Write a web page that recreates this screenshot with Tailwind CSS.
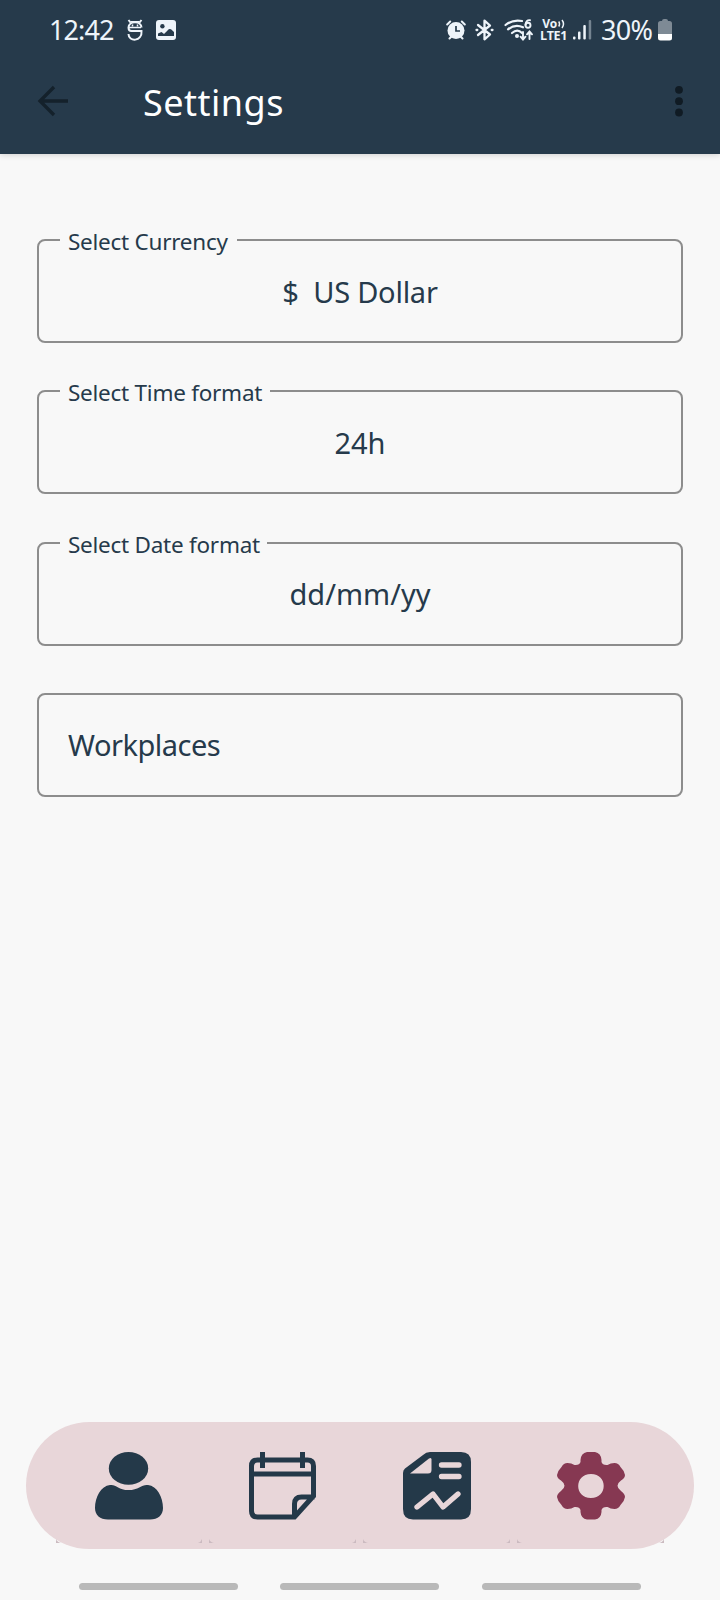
<!DOCTYPE html>
<html lang="en">
<head>
<meta charset="utf-8">
<title>Settings</title>
<script src="https://cdn.jsdelivr.net/npm/@tailwindcss/browser@4"></script>
</head>
<body class="w-[720px] h-[1600px] overflow-hidden flex flex-col bg-[#f8f8f8] text-[#263a4b] font-['Noto_Sans',sans-serif] whitespace-nowrap">
<header class="h-[154px] shrink-0 bg-[#263a4b] text-white shadow-[0_1px_6px_rgba(0,0,0,0.16)] flex flex-col">
  <div class="h-[59px] flex items-center pl-[49px] pr-[48px] text-[#eef4fa]">
    <span class="w-[78px] pt-px text-[27px] tracking-[-0.900px]">12:42</span>
    <svg class="w-4 h-[22px]" viewBox="0 0 16 22" fill="none" stroke="currentColor" stroke-width="2">
      <path d="M1.500 1l2 2.500M14.500 1l-2 2.500M14.500 8.500C14 1.500 2 1.500 1.500 8.500c0 2 1 3.500 3 3.500h10c1 11-13 11-13 3"/>
      <path d="M2 8.500h12M3.500 2.800h9" stroke-width="1.400"/><path d="M5.500 5.500v2M10.500 5.500v2" stroke-width="1.500"/>
    </svg>
    <svg class="w-[20px] h-[20px] ml-[13px]" viewBox="0 0 20 20"><rect width="20" height="20" rx="3" fill="currentColor"/><circle cx="6.400" cy="6.300" r="2.200" fill="#263a4b"/><path d="M2 16V13.500l3.500-1.500 2.500 2 5-5 2 .3 3 2.700v4z" fill="#263a4b"/></svg>
    <svg class="w-[20px] h-[20px] ml-auto" viewBox="0 0 20 20" fill="none" stroke="currentColor" stroke-width="2" stroke-linecap="round"><circle cx="10" cy="10.500" r="8.500" fill="currentColor" stroke="none"/><path d="M1.200 4.500L4.200 1.500M18.800 4.500l-3-3M3.500 18.500l2-2M16.500 18.500l-2-2"/><path d="M10 6v5h4" stroke="#263a4b" stroke-width="1.700" stroke-linecap="butt"/></svg>
    <svg class="w-[19px] h-[22px] ml-[9px]" viewBox="0 0 19 22" fill="none" stroke="currentColor" stroke-width="2.300" stroke-linejoin="round" stroke-linecap="round"><path d="M3 6l12 9.500-5.500 4.800V1.700L15 6.500 3 16M1.500 11h.8M16.700 11h.8"/></svg>
    <svg class="w-[30px] h-[22px] ml-[10px]" viewBox="0 0 30 22" fill="none" stroke="currentColor" stroke-width="2.200" stroke-linecap="round"><path d="M1.500 6C7 1.500 12 .8 18 2M4 10.300c5-4 10-4.500 15-2M8 14c3.500-3 7-3 10 0"/><circle cx="13" cy="17" r="2" fill="currentColor" stroke="none"/><path d="M26 1.200q-4-.5-4.500 4.800" stroke-width="1.900"/><circle cx="24" cy="6.300" r="2.500" stroke-width="1.900"/><path d="M19 13v7m-2.500-2.300L19 20.500l2.500-2.800M25.500 20v-7M23 15.300l2.500-2.800 2.500 2.800" stroke-width="1.900"/></svg>
    <div class="w-[27px] h-[24px] ml-[6px] flex flex-col items-center font-['Open_Sans',sans-serif] font-bold">
      <div class="h-[12px] flex items-center gap-px"><span class="text-[12px] leading-[12px] tracking-[-0.300px]">Vo</span><svg class="w-[7px] h-[10px]" viewBox="0 0 7 10" fill="none" stroke="currentColor" stroke-width="1.500"><path d="M.7 2.500q1.600 2.500 0 5M4 1q3 4 0 8"/></svg></div>
      <span class="h-[12px] text-[12.500px] leading-[12px] tracking-[-0.300px]">LTE1</span>
    </div>
    <svg class="w-[19px] h-[20px] ml-[6px]" viewBox="0 0 19 20" fill="currentColor"><rect y="16.500" width="2.500" height="3" rx="1"/><rect x="5" y="11.500" width="2.500" height="8" rx="1"/><rect x="10.300" y="5" width="2.500" height="14.500" rx="1"/><rect x="15.700" y="0" width="2.500" height="19.500" rx="1" opacity=".4"/></svg>
    <span class="w-[57px] ml-[9px] pt-px text-[27px] tracking-[-0.700px]">30%</span>
    <svg class="w-[14px] h-[22px]" viewBox="0 0 14 22"><path d="M4 2q0-2 2-2h2q2 0 2 2h1.500Q14 2 14 4.500V16H0V4.500Q0 2 2.500 2z" fill="#7e8a95"/><path d="M0 15h14v4q0 2.500-2.500 2.500h-9Q0 21.500 0 19z" fill="#fff"/></svg>
  </div>
  <div class="h-[84px] flex items-center pl-[37px] pr-[37px]">
    <svg class="w-8 h-8" viewBox="0 0 32 32" fill="none" stroke="#14212b" stroke-width="3.300"><path d="M17 2L3 16l14 14M3 16h28"/></svg>
    <h1 class="ml-[74px] pt-[3px] text-[36px] tracking-[0.500px]">Settings</h1>
    <svg class="ml-auto w-2 h-8" viewBox="0 0 8 32" fill="#101b24"><circle cx="4" cy="4.800" r="3.900"/><circle cx="4" cy="16.200" r="3.900"/><circle cx="4" cy="27.500" r="3.900"/></svg>
  </div>
</header>
<main class="flex-1 flex flex-col gap-[47.300px] pt-[85px] px-[37px]">
  <section class="relative h-[104px] border-2 border-[#8d8d8d] rounded-lg flex items-center justify-center">
    <span class="absolute left-[21px] -top-[15px] w-[177px] pl-[8px] bg-[#f8f8f8] text-[22.500px] leading-8 tracking-[-0.250px]">Select Currency</span>
    <span class="pt-px text-[29px] tracking-[-0.250px] whitespace-pre">$  US Dollar</span>
  </section>
  <section class="relative h-[104px] border-2 border-[#8d8d8d] rounded-lg flex items-center justify-center">
    <span class="absolute left-[21px] -top-[15px] w-[210px] pl-[8px] bg-[#f8f8f8] text-[22.500px] leading-8 tracking-[-0.250px]">Select Time format</span>
    <span class="text-[29px]">24h</span>
  </section>
  <section class="relative h-[104px] border-2 border-[#8d8d8d] rounded-lg flex items-center justify-center">
    <span class="absolute left-[21px] -top-[15px] w-[207px] pl-[8px] bg-[#f8f8f8] text-[22.500px] leading-8 tracking-[-0.250px]">Select Date format</span>
    <span class="text-[29px]">dd/mm/yy</span>
  </section>
  <section class="h-[104px] border-2 border-[#8d8d8d] rounded-lg flex items-center pl-[29px]">
    <span class="text-[29px] tracking-[-0.500px]">Workplaces</span>
  </section>
</main>
<nav class="relative mx-[26px] h-[127px] mb-[51px] shrink-0 rounded-full bg-[#e8d6d9] flex gap-[86px] pl-[69px] pt-[30px]">
  <svg class="w-[68px] h-[68px]" viewBox="0 0 68 68" fill="#243949"><ellipse cx="33.500" cy="16.400" rx="19.700" ry="16.400"/><path d="M15 33c6-1 8 5 18.500 5S47 32 53 33c9 1 15 12 15 23 0 7-5 11.500-13 11.500H13C5 67.500 0 63 0 56c0-11 6-22 15-23z"/></svg>
  <svg class="w-[68px] h-[68px]" viewBox="0.5 0 68 68" fill="none" stroke="#243949" stroke-width="5"><path d="M46 65H9q-6 0-6-6V14q0-6 6-6h50q6 0 6 6v30L46 65zV52q0-7 7-7h13M3 22h62M14 0v16M54 0v16"/></svg>
  <svg class="w-[68px] h-[68px]" viewBox="0 0 68 68"><path d="M27 0h31q10 0 10 10v47q0 10.500-10 10.500H10Q0 67.500 0 57V21q0-3 2-4.500L20 3q3-3 7-3z" fill="#243949"/><path d="M7 21.500L26 6.500q2.500-1.500 2.500 1V18q0 3.500-3.500 3.500z" fill="#e8d6d9"/><g fill="none" stroke="#e8d6d9" stroke-width="5.300" stroke-linecap="round" stroke-linejoin="round"><path d="M38.500 13H56M38.500 24.500H56M14 55l16-13 10 13 15-13"/></g></svg>
  <svg class="w-[68px] h-[68px]" viewBox="0 0 68 68"><path fill="#863852" fill-rule="evenodd" d="M30 0h8q6 1 6.500 8v2q1 3.500 6 3 3-2 7-2 4 0 6 4 4 4 4.500 8 0 3-4 5.500-3.500 2.500-3.500 5.300t3.500 5.200q4 3 4 6-.5 4-4.500 8-2 4-6 4-4 0-7-2-5-.5-6 3v2q-.5 6.500-6.500 7.500h-8q-6-1-6.500-7.500v-2q-1-3.500-6-3-3 2-7 2-4 0-6-4-4-4-4.500-8 0-3 4-6 3.500-2.400 3.500-5.200T4 28.500Q0 26 0 23q.5-4 4.500-8 2-4 6-4 4 0 7 2 5 .5 6-3V8Q24 1 30 0zM34 22c-17 0-17 24 0 24s17-24 0-24z"/></svg>
  <svg class="absolute left-[30px] top-[117px] w-[608px] h-[4px]" viewBox="0 0 608 4" fill="#cbbac0"><path d="M0 0q1 3 5 4H0zM146 0q-1 3-4 4h4zM153 0q1 3 5 4h-5zM300 0q-1 3-4 4h4zM307 0q1 3 5 4h-5zM454 0q-1 3-4 4h4zM461 0q1 3 5 4h-5zM608 0q-1 3-5 4h5z"/></svg>
  <div class="absolute left-[53px] top-[161px] flex"><i class="w-[159px] h-[7px] rounded-full bg-[#b9b9b9]"></i><i class="ml-[42px] w-[159px] h-[7px] rounded-full bg-[#b9b9b9]"></i><i class="ml-[43px] w-[159px] h-[7px] rounded-full bg-[#b9b9b9]"></i></div>
</nav>
</body>
</html>
